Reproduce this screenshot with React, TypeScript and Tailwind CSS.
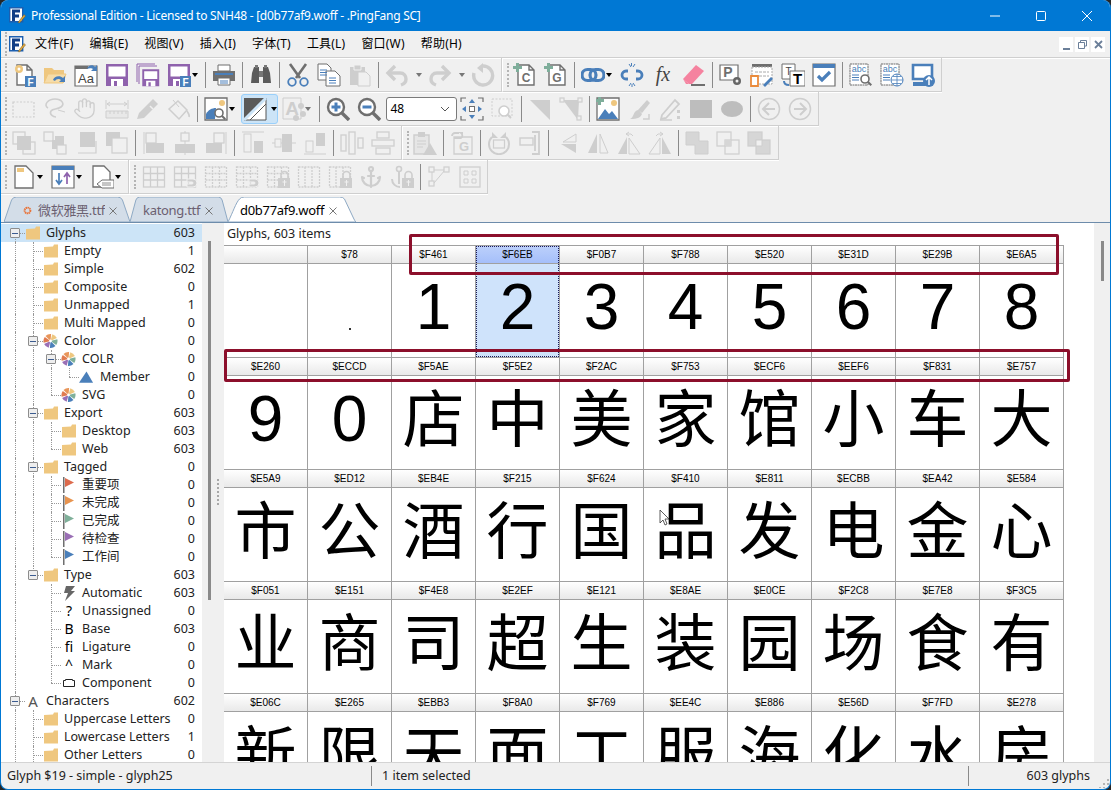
import React from 'react';
import { Hand, Anchor } from 'lucide-react';

const uiFont = "font-['Noto_Sans','Noto_Sans_CJK_SC',sans-serif]";
const G = '#cecece'; // disabled icon grey
const D = '#6f6f6f'; // dark icon grey
const B = '#4a7fba';
const P = '#8f62ad';
const T = '#efc77f';

const I = ({ children }: { children?: React.ReactNode }) => (
  <svg viewBox="0 0 24 24" className="w-6 h-6 mx-[3.5px] shrink-0">{children}</svg>
);
const Tri = () => <span className="block w-0 h-0 border-x-[3.5px] border-x-transparent border-t-[4px] border-t-black" />;
const TriG = () => <span className="block w-0 h-0 border-x-[3.5px] border-x-transparent border-t-[4px] border-t-[#777]" />;
const Drop = () => <span className="w-3 flex justify-center shrink-0"><TriG /></span>;
const DropT = ({ grey }: { grey?: boolean }) => <span className="w-3 -ml-1 pl-px shrink-0">{grey ? <TriG /> : <Tri />}</span>;
const Sep = () => <span className="w-px h-[26px] mx-[2.5px] bg-[#8a8a8a] shrink-0" />;
const Grip = ({ w }: { w: string }) => (
  <span className={`${w} h-full flex items-center pl-1 shrink-0`}>
    <span className="h-[24px] border-l-2 border-dotted border-[#b4b4b4]" />
  </span>
);
const Bar = ({ children, className = '' }: { children: React.ReactNode; className?: string }) => (
  <div className={`flex items-center h-[34px] border-b border-r border-[#cfcfcf] shadow-[0_1px_0_#fff] shrink-0 ${className}`}>{children}</div>
);

const Page = ({ c = D, x = 5, w = 15 }: { c?: string; x?: number; w?: number }) => (
  <path d={`M${x} 2h${w - 5}l5 5v15h-${w}z M${x + w - 5} 2v5h5`} fill="#fff" stroke={c} strokeWidth="1.4" />
);
const Label = ({ x, y, s, c = D, size = 11, w = 700 }: { x: number; y: number; s: string; c?: string; size?: number; w?: number }) => (
  <text x={x} y={y} fontSize={size} fontWeight={w} fill={c} textAnchor="middle" fontFamily="Liberation Sans, sans-serif">{s}</text>
);
const Floppy = ({ c = P }: { c?: string }) => (
  <g><path d="M1 1h22v22h-22z" fill={c} /><path d="M3.500 3.500h17v10h-17z" fill="#fff" /><path d="M6 16h12v7h-12z" fill="#fff" /><path d="M9 18h3v5h-3z" fill={c} /></g>
);
const BlueF = () => (
  <g><path d="M13 13h11v11h-11z" fill={B} /><Label x={18.500} y={22.500} s="F" c="#fff" size={10} /></g>
);
const Plus = () => <path d="M3 0h3v3h3v3h-3v3h-3v-3h-3v-3h3z" fill="#7fae9b" />;
const PieMark = () => {
  const cols = ['#eec77f', '#7fb09a', B, '#9a6fb5', '#e07a50', '#e8955a'];
  return (
    <>
      {cols.map((c, i) => {
        const a = (i * 60 - 75) * Math.PI / 180;
        const b = ((i + 1) * 60 - 85) * Math.PI / 180;
        return <path key={c} d={`M8 8L${8 + 7.500 * Math.cos(a)} ${8 + 7.500 * Math.sin(a)}A7.500 7.500 0 0 1 ${8 + 7.500 * Math.cos(b)} ${8 + 7.500 * Math.sin(b)}z`} fill={c} />;
      })}
      <circle cx="8" cy="8" r="1.500" fill="#fff" />
    </>
  );
};
const Logo = () => (
  <svg viewBox="0 0 17 17" className="w-[17px] h-[17px] shrink-0">
    <path d="M0.700 0.700h13v14h-13z" fill="#fff" stroke="#1c5fb0" strokeWidth="1.400" />
    <path d="M3 2.500h8v3h-5v2h4v3h-4v3.500h-3z" fill="#123f86" />
    <path d="M9 15.500l6-8 1.500 1.500-6 7z" fill="#e3a63a" stroke="#6b5a2a" strokeWidth="0.500" />
  </svg>
);

const row1a = (
  <>
    <I><Page /><circle cx="7" cy="6" r="4" fill="#eec77f" /><circle cx="7" cy="6" r="1.500" fill="#fff" /><BlueF /></I>
    <I><path d="M1 20V5h8l2 2h10v13z" fill={T} /><path d="M1 20l4-9h18l-3 9z" fill="#f6dca8" stroke={T} /><path d="M10 17c1-4 7-5 10-2l2-2v6h-6l2-2c-2-2-5-1-6 1z" fill={B} /></I>
    <I><path d="M1 3h22v20h-22z" fill="#fff" stroke={D} strokeWidth="1.200" /><path d="M1 3h13v3h-13z" fill={D} /><Label x={12} y={20} s="Aa" size={13} w={400} c="#444" /><path d="M13 6c1-4 6-5 8-2l2-2v6h-6l2-2c-1-1-4-1-6 0z" fill={B} /></I>
    <I><Floppy /></I>
    <I><path d="M1 1h18M1 1v18M3 3h18M3 3v18" stroke={P} fill="none" /><g transform="translate(5.500 5.500) scale(0.770)"><Floppy /></g></I>
    <I><Floppy /><BlueF /></I>
  </>
);

const Lines = ({ x, y, c = B }: { x: number; y: number; c?: string }) => (
  <path d={`M${x} ${y}h7M${x} ${y + 2.500}h7M${x} ${y + 5}h7`} stroke={c} strokeWidth="1" />
);
const Mag = ({ cx, cy, r = 3.500, c = D }: { cx: number; cy: number; r?: number; c?: string }) => (
  <g><circle cx={cx} cy={cy} r={r} fill="#fff" stroke={c} strokeWidth="1.600" /><path d={`M${cx + r * 0.7} ${cy + r * 0.7}l3.500 3.500`} stroke={c} strokeWidth="2" /></g>
);
const Arrow = ({ flip, c = G }: { flip?: boolean; c?: string }) => (
  <g transform={flip ? 'translate(24 0) scale(-1 1)' : undefined} fill="none" stroke={c} strokeWidth="3.400">
    <path d="M4 10h11c4 0 6 3 6 6s-2 5-5 6" /><path d="M10 3l-7 7 7 7" />
  </g>
);
const Box = ({ x, y, s = 10, f = 'none', c = G }: { x: number; y: number; s?: number; f?: string; c?: string }) => (
  <rect x={x} y={y} width={s} height={s} fill={f} stroke={c} strokeWidth="1.200" />
);
const Grid3 = ({ dash }: { dash?: boolean }) => (
  <g fill="none" stroke={G} strokeWidth="1.300" strokeDasharray={dash ? '2 1' : undefined}>
    <rect x="1.500" y="2" width="21" height="20" /><path d="M8.500 2v20M15.500 2v20M1.500 8.500h21M1.500 15h21" />
  </g>
);
const Lock = () => <g><path d="M15 13v-3a3.500 3.500 0 0 1 7 0v3" fill="none" stroke={G} strokeWidth="1.600" /><path d="M12 13h13v10h-13z" fill={G} /><path d="M18.500 15v6M16.500 17h4" stroke="#f0f0f0" /></g>;

const Toolbars = () => (
  <div className="flex flex-col shrink-0">
    <div className="flex">
      <Bar>
        <Grip w="w-[7.500px]" />
        {row1a}
        <DropT />
        <Sep />
        <I><path d="M6 2h12v6h-12z" fill="#fff" stroke={D} /><path d="M1 8h22v10h-22z" fill={D} /><path d="M3 10h18v2h-18z" fill={B} /><path d="M6 15h12v7h-12z" fill="#fff" stroke={D} /><path d="M8 18h8M8 20h8" stroke={B} /></I>
        <Sep />
        <I><path d="M3 10l2-6h5v16h-8zM21 10l-2-6h-5v16h8z" fill="#5b5b5b" /><path d="M10 8h4v6h-4z" fill="#777" /><path d="M6 2h3v3h-3zM15 2h3v3h-3z" fill="#777" /></I>
        <Sep />
        <I><path d="M4 1l10 14M20 1l-10 14" stroke={D} strokeWidth="2.600" /><circle cx="6" cy="19" r="3.800" fill="none" stroke={B} strokeWidth="1.800" /><circle cx="18" cy="19" r="3.800" fill="none" stroke={B} strokeWidth="1.800" /></I>
        <I><path d="M1 1h9l4 4v12h-13z" fill="#fff" stroke={D} /><path d="M9 8h9l5 5v10h-14z" fill="#fff" stroke={D} /><Lines x={3} y={7} /><Lines x={12} y={15} /></I>
        <I><path d="M2 4h15v18h-15z" fill={G} /><path d="M6 2h7v5h-7z" fill={G} stroke="#f0f0f0" /><path d="M10 9h8l4 4v10h-12z" fill="#f0f0f0" stroke={G} /></I>
        <Sep />
        <I><Arrow /></I>
        <Drop />
        <I><Arrow flip /></I>
        <Drop />
        <I><path d="M12 3a9.500 9.500 0 1 1-9 7" fill="none" stroke={G} strokeWidth="3.400" /><path d="M12 0v10l-6-5z" fill={G} /></I>
        <span className="w-0.5" />
      </Bar>
      <Bar className="border-l border-l-white">
        <Grip w="w-[7px]" />
        <I><Page x={5} w={16} /><Plus /><Label x={13} y={19} s="C" size={12} /></I>
        <I><Page x={5} w={16} /><Plus /><Label x={13} y={19} s="G" size={12} /></I>
        <Sep />
        <I><g fill="none" stroke={B} strokeWidth="3.200"><rect x="1" y="6.500" width="14" height="11" rx="5.500" /><rect x="9" y="6.500" width="14" height="11" rx="5.500" /></g></I>
        <DropT />
        <I><g fill="none" stroke={B} strokeWidth="2.800"><path d="M8 8h-2a4 4 0 0 0 0 8h2M16 8h2a4 4 0 0 1 0 8h-2" /></g><path d="M9 1l2 3M15 1l-2 3M9 23l2-3M15 23l-2-3M11.500 0v3M12 21v3" stroke={B} /></I>
        <I><text x="12" y="18" fontSize="20" fontStyle="italic" fill="#444" textAnchor="middle" fontFamily="Liberation Serif, serif">fx</text></I>
        <I><path d="M1 16L14 2l8 6-12 13h-3z" fill="#f5829f" /><path d="M1 16l6 5h-3z" fill="#f5829f" /><path d="M9 21h14v2h-14z" fill={D} /></I>
        <Sep />
        <I><path d="M1 2h18v15h-18z" fill="#fff" stroke={D} strokeWidth="1.200" /><Label x={9} y={14} s="P" size={14} /><circle cx="18" cy="18" r="4" fill="#666" /><circle cx="18" cy="18" r="1.500" fill="#f0f0f0" /></I>
        <I><path d="M2 1h20v3h-20z" fill={D} /><path d="M2 4h20v17h-20z" fill="#fff" stroke="#aaa" strokeDasharray="2 1" /><path d="M5 9h14M5 13h14" stroke="#aaa" strokeDasharray="3 1" /><path d="M1 13h7v10h-7z" fill="#fff" stroke="#ea8b3c" strokeWidth="1.800" /><path d="M13 22l8-8 2 2-8 8z" fill={B} /></I>
        <I><path d="M1 1h13v15h-13z" fill="#fff" stroke={D} /><Label x={7.500} y={12} s="T" size={10} c="#444" w={400} /><path d="M9 8h15v15h-15z" fill="#fff" stroke={D} /><Label x={16.500} y={21} s="T" size={15} c="#000" /><path d="M3 18c0 3 2 4 5 4" fill="none" stroke={B} strokeWidth="2" /></I>
        <I><path d="M1 1h22v22h-22z" fill="#fff" stroke={D} strokeWidth="1.200" /><path d="M1 1h22v4h-22z" fill={B} /><path d="M6 13l4 4 8-8" fill="none" stroke={B} strokeWidth="3.200" /></I>
        <Sep />
        <I><path d="M1 1h18v21h-18z" fill="#fff" stroke={D} strokeDasharray="2 0.500" /><Label x={10} y={9} s="abc" size={9} c={B} w={400} /><Lines x={3} y={12} /><Mag cx={16} cy={16} r={4} /></I>
        <I><path d="M1 1h18v21h-18z" fill="#fff" stroke={D} strokeDasharray="2 0.500" /><Label x={10} y={9} s="abc" size={9} c={B} w={400} /><Lines x={3} y={12} /><circle cx="17" cy="17" r="6" fill="#fff" stroke={B} /><path d="M11 17h12M17 11v12M13 13.500h8M13 20.500h8" stroke={B} strokeWidth="0.800" /></I>
        <I><path d="M2 2h19v14h-19z" fill="#fff" stroke={B} strokeWidth="2.600" /><path d="M2 19h12v4h-12z" fill={B} /><circle cx="18" cy="18" r="6" fill={B} /><path d="M18 22v-7M15 17l3-3 3 3" stroke="#fff" strokeWidth="1.500" fill="none" /></I>
        <span className="w-[2px]" />
      </Bar>
    </div>

    <Bar className="self-start">
      <Grip w="w-[7.500px]" />
      <I><rect x="1" y="5" width="21" height="15" fill="none" stroke={G} strokeWidth="1.200" strokeDasharray="2 1.500" /></I>
      <I><path d="M5 11c-5-3 0-9 7-9s10 5 6 8-8 1-10 4 2 6 5 6" fill="none" stroke={G} strokeWidth="1.600" /><path d="M15 13l7 2" stroke={G} /></I>
      <span className="w-6 mx-[3.500px] shrink-0 flex -translate-x-px"><Hand size={23} color={G} strokeWidth={1.400} /></span>
      <I><path d="M1 3v9M23 3v9M2 7h20M2 7l3-2M2 7l3 2M22 7l-3-2M22 7l-3 2" stroke={G} fill="none" /><path d="M1 14h22v7h-22z" fill="#e8e8e8" stroke={G} /><path d="M5 14v3M9 14v3M13 14v3M17 14v3M21 14v3" stroke={G} /></I>
      <I><path d="M3 16L17 2l5 5-14 14-7 1z" fill={G} /><path d="M14 9l3 3" stroke="#f0f0f0" strokeWidth="1.500" /></I>
      <I><path d="M11 4l9 9-8 9-10-10z" fill="#f0f0f0" stroke={G} strokeWidth="1.500" /><path d="M6 3l6 7" stroke={G} /><path d="M20 14c1 2 3 4 2 6" stroke={G} fill="none" strokeWidth="1.600" /></I>
      <Sep />
      <I><path d="M1 1h22v22h-22z" fill="#fff" stroke={D} strokeWidth="1.300" /><circle cx="18" cy="6" r="3" fill={T} /><path d="M2 22v-5c2-4 6-6 10-6l-1 11z" fill={B} /><Mag cx={15} cy={16} r={4} /></I>
      <DropT />
      <span className="ml-[1.500px] w-[37px] h-[30px] flex items-center rounded-[3px] border border-[#9ad0fb] bg-[#cce4f7] shrink-0">
        <svg viewBox="0 0 24 24" className="w-6 h-6 ml-[1px] shrink-0">
          <path d="M1 23V1h22z" fill="#5a5a5a" /><path d="M1 23L23 1v22z" fill="#fff" stroke="#555" /><path d="M1 23L23 1" stroke="#cce4f7" strokeWidth="3" /><path d="M7 23L23 7" stroke="#555" />
        </svg>
        <span className="ml-[4px]"><Tri /></span>
      </span>
      <I><path d="M1 1h18v21h-18z" fill="none" stroke={G} /><Label x={10} y={18} s="A" size={19} c={G} /><circle cx="19" cy="9" r="3" fill={G} /><circle cx="21" cy="17" r="3" fill={G} /><circle cx="14" cy="21" r="3" fill={G} /></I>
      <span className="w-[11px] -ml-1 shrink-0"><TriG /></span>
      <Sep />
      <I><circle cx="10" cy="10" r="8" fill="#fff" stroke={D} strokeWidth="2.400" /><path d="M16 16l7 7" stroke={D} strokeWidth="3.400" /><path d="M5.500 10h9M10 5.500v9" stroke={B} strokeWidth="3" /></I>
      <I><circle cx="10" cy="10" r="8" fill="#fff" stroke={D} strokeWidth="2.400" /><path d="M16 16l7 7" stroke={D} strokeWidth="3.400" /><path d="M5.500 10h9" stroke={B} strokeWidth="3" /></I>
      <div className={`ml-[1.500px] w-[71px] h-[24px] flex items-center justify-between pl-1 pr-[6px] bg-white border border-[#7a7a7a] rounded-[3px] text-[12px] text-black shrink-0 ${uiFont}`}>
        <span>48</span>
        <svg viewBox="0 0 10 6" className="w-[10px] h-[6px]"><path d="M1 1l4 4 4-4" fill="none" stroke="#555" /></svg>
      </div>
      <I><path d="M1 5V1h5M18 1h5v4M23 19v4h-5M6 23h-5v-4" fill="none" stroke={D} strokeWidth="1.200" /><rect x="9.500" y="9.500" width="5" height="5" fill="#fff" stroke={D} /><path d="M12 2l3 4h-6zM12 22l3-4h-6zM2 12l4-3v6zM22 12l-4-3v6z" fill={B} /></I>
      <I><rect x="1" y="2" width="20" height="17" fill="none" stroke={G} strokeDasharray="2 1.500" /><Mag cx={13} cy={14} r={5} c={G} /></I>
      <Sep />
      <I><path d="M2 3h20v20z" fill={G} /></I>
      <I><path d="M4 3h16l-1 20z" fill={G} /><Box x={1} y={1} s={4} f="#f0f0f0" /><Box x={19} y={1} s={4} f="#f0f0f0" /><Box x={18} y={19} s={4} f="#f0f0f0" /></I>
      <Sep />
      <I><path d="M1 1h22v22h-22z" fill="#fff" stroke={D} strokeWidth="1.300" /><path d="M2 22l7-10 4 5 3-3 6 8z" fill={B} /><circle cx="18" cy="6" r="3" fill={T} /><g transform="translate(-1 -1)"><Plus /></g></I>
      <I><path d="M11 13l9-10 3 3-8 10z" fill={G} /><path d="M3 22c4-1 3-9 9-9l3 4c-1 3-4 5-12 5z" fill={G} /><path d="M16 22h6v-5" fill="none" stroke={G} strokeWidth="1.500" /></I>
      <I><path d="M4 18L17 3l4 4-13 14-5 1z" fill="#f0f0f0" stroke={G} strokeWidth="1.800" /><path d="M2 23h12" stroke={G} strokeWidth="1.500" /><path d="M19 13h3v3h-3zM19 19h3v3h-3z" fill={G} /></I>
      <I><path d="M1 3h22v18h-22z" fill="#bdbdbd" /></I>
      <I><ellipse cx="12" cy="12" rx="11" ry="8" fill="#bdbdbd" /></I>
      <Sep />
      <I><circle cx="12" cy="12" r="10.500" fill="none" stroke={G} strokeWidth="1.500" /><path d="M18 12h-11M12 6l-6 6 6 6" fill="none" stroke={G} strokeWidth="2" /></I>
      <I><circle cx="12" cy="12" r="10.500" fill="none" stroke={G} strokeWidth="1.500" /><path d="M6 12h11M12 6l6 6-6 6" fill="none" stroke={G} strokeWidth="2" /></I>
      <span className="w-[2px]" />
    </Bar>

    <div className="flex">
      <Bar>
        <Grip w="w-[7.500px]" />
        <I><Box x={1} y={1} s={12} f="#f0f0f0" /><Box x={11} y={11} s={12} f="#f0f0f0" /><path d="M5 5h14v14h-14z" fill={G} /></I>
        <I><Box x={1} y={1} s={9} /><path d="M9 9h9v9h-9z" fill={G} /><path d="M12 5h9v9h-9z" fill={G} /><Box x={14} y={14} s={9} f="#f0f0f0" /></I>
        <I><path d="M6 1h15v15h-15z" fill={G} /><path d="M22 10v12h-18" fill="none" stroke={G} strokeWidth="1.200" /></I>
        <I><path d="M1 1h14v14h-14z" fill={G} /><Box x={7} y={7} s={15} f="#f0f0f0" /></I>
        <Sep />
        <I><path d="M2 1v22" stroke={G} /><Box x={4} y={2} s={10} /><path d="M4 12h18v10h-18z" fill={G} /></I>
        <I><path d="M12 0v24" stroke={G} /><Box x={8} y={2} s={8} f="#f0f0f0" /><path d="M2 13h20v9h-20z" fill={G} /></I>
        <I><path d="M22 1v22" stroke={G} /><Box x={10} y={2} s={10} /><path d="M2 12h16v10h-16z" fill={G} /></I>
        <Sep />
        <I><path d="M1 1h22" stroke={G} /><rect x="3" y="3" width="7" height="18" fill="none" stroke={G} /><path d="M13 10h9v12h-9z" fill={G} /></I>
        <I><path d="M0 12h24" stroke={G} /><rect x="3" y="8" width="6" height="8" fill="#f0f0f0" stroke={G} /><path d="M10 3h10v18h-10z" fill={G} /></I>
        <I><path d="M1 23h22" stroke={G} /><rect x="3" y="10" width="7" height="11" fill="none" stroke={G} /><path d="M13 2h9v13h-9z" fill={G} /></I>
        <Sep />
        <I><g fill="none" stroke={G} strokeWidth="1.300"><rect x="1" y="4" width="5" height="16" /><rect x="9" y="1" width="6" height="22" /><rect x="18" y="7" width="5" height="10" /></g></I>
        <I><g fill="none" stroke={G} strokeWidth="1.300"><rect x="6" y="1" width="12" height="6" /><rect x="1" y="9" width="22" height="6" /><rect x="5" y="17" width="14" height="6" /></g></I>
        <span className="w-[2px]" />
      </Bar>
      <Bar className="border-l border-l-white">
        <Grip w="w-[7px]" />
        <I><path d="M1 4h15v19h-15z" fill="#e6e6e6" stroke={G} strokeWidth="1.500" /><path d="M5 1h7v5h-7z" fill={G} /><path d="M4 10h9M4 13h9M4 16h6" stroke={G} /><path d="M17 12l7 12h-14z" fill={G} /></I>
        <Sep />
        <I><path d="M4 6h18v17h-18z" fill="none" stroke={G} strokeWidth="1.300" /><Label x={14} y={20} s="G" size={13} c={G} /><path d="M2 5a3 3 0 0 1 3-3h4M13 2h-2a3 3 0 0 1 0 5H4" fill="none" stroke={G} strokeWidth="1.800" /></I>
        <Sep />
        <I><path d="M5 6a10 10 0 1 0 14 0" fill="none" stroke={G} strokeWidth="2" /><path d="M5 1v6h6zM19 1v6h-6z" fill={G} /><rect x="6.500" y="9" width="11" height="8" fill="#f0f0f0" stroke={G} strokeWidth="1.200" /></I>
        <I><path d="M14 1h7v22h-7M17 4v16" fill="none" stroke={G} strokeWidth="1.800" /><rect x="2" y="7" width="13" height="7" fill="none" stroke={G} strokeWidth="1.400" /></I>
        <Sep />
        <I><path d="M21 3v8l-13 0z" fill="#f0f0f0" stroke={G} /><path d="M21 13v9l-15-9z" fill={G} /></I>
        <I><path d="M11 3v19h-9z" fill={G} /><path d="M14 3v19h8z" fill="#f0f0f0" stroke={G} /></I>
        <I><path d="M10 6v17h-9z" fill={G} /><path d="M12 7v16h11z" fill="#f0f0f0" stroke={G} /><path d="M12 1l-3 2 3 2M9 3h5l2 2" fill="none" stroke={G} /></I>
        <I><path d="M14 6v17h9z" fill={G} /><path d="M12 7v16h-11z" fill="#f0f0f0" stroke={G} /><path d="M12 1l3 2-3 2M15 3h-5l-2 2" fill="none" stroke={G} /></I>
        <Sep />
        <I><path d="M1 1h13v9h9v13h-13v-9h-9z" fill="#d6d6d6" stroke={G} /></I>
        <I><Box x={1} y={1} s={14} /><Box x={9} y={9} s={14} /><path d="M9 9h6v6h-6z" fill="#d6d6d6" /></I>
        <I><Box x={1} y={1} s={14} f="#d6d6d6" /><Box x={9} y={9} s={14} f="#d6d6d6" /><path d="M9 9h6v6h-6z" fill="#f0f0f0" stroke={G} /></I>
        <span className="w-[3px]" />
      </Bar>
    </div>

    <div className="flex">
      <Bar>
        <Grip w="w-[7.500px]" />
        <I><path d="M3 1h11l7 7v15h-18z" fill="#fff" stroke={D} strokeWidth="1.300" /><path d="M5 3h7v4h-7z" fill={T} /></I>
        <DropT />
        <I><path d="M1 1h22v22h-22z" fill="#fff" stroke={D} strokeWidth="1.200" /><path d="M1 1h22v4h-22z" fill={B} /><path d="M8 8v11M5 15l3 4 3-4" fill="none" stroke={B} strokeWidth="1.700" /><path d="M16 19V8M13 12l3-4 3 4" fill="none" stroke={P} strokeWidth="1.700" /></I>
        <DropT />
        <I><path d="M3 1h11l6 6v15h-17z" fill="#fff" stroke={D} strokeWidth="1.300" /><path d="M24 15v8h-12l-5-4 5-4z" fill="#fff" stroke={D} /><path d="M12 18h9M12 20h9" stroke={D} strokeWidth="0.800" /></I>
        <DropT />
        <span className="w-[2px]" />
      </Bar>
      <Bar className="border-l border-l-white">
        <Grip w="w-[8.500px]" />
        <I><Grid3 /></I>
        <I><Grid3 /><path d="M14 14h6a4 4 0 0 1 0 8h-6v-3h5a1 1 0 0 0 0-2h-5z" fill={G} stroke="#f0f0f0" /></I>
        <I><Grid3 dash /></I>
        <I><Grid3 dash /><path d="M14 14h6a4 4 0 0 1 0 8h-6v-3h5a1 1 0 0 0 0-2h-5z" fill={G} stroke="#f0f0f0" /></I>
        <I><Grid3 dash /><Lock /></I>
        <I><g fill="none" stroke={G} strokeWidth="1.300" strokeDasharray="2 1"><rect x="1.500" y="2" width="21" height="20" /><path d="M8 2v20M15 2v20" /></g></I>
        <I><g fill="none" stroke={G} strokeWidth="1.300" strokeDasharray="2 1"><rect x="1.500" y="2" width="21" height="20" /><path d="M8 2v20M15 2v20" /></g><Lock /></I>
        <span className="w-6 mx-[3.500px] shrink-0 flex"><Anchor size={24} color={G} strokeWidth={2.200} /></span>
        <I><circle cx="9" cy="4" r="2.500" fill="none" stroke={G} strokeWidth="1.600" /><path d="M9 7v12M2 14c0 5 4 8 8 8" fill="none" stroke={G} strokeWidth="2" /><Lock /></I>
        <Sep />
        <I><path d="M5 5l13 0M5 5v13M18 5L7 18" stroke={G} /><Box x={2} y={16} s={5} f="#f0f0f0" /><Box x={2} y={2} s={5} f="#f0f0f0" /><Box x={17} y={2} s={5} f="#f0f0f0" /></I>
        <I><rect x="2" y="2" width="20" height="20" fill="none" stroke={G} strokeWidth="1.300" /><path d="M6 6h4v4h-4zM14 6h4v4h-4zM6 14h4v4h-4zM14 14h4v4h-4z" fill="none" stroke={G} /></I>
        <span className="w-[1.500px]" />
      </Bar>
    </div>
  </div>
);

const TabShape = ({ active }: { active?: boolean }) => (
  <svg viewBox="0 0 100 25" preserveAspectRatio="none" className="absolute inset-0 w-full h-full">
    <path
      d={active ? 'M0 25C4 15 6 6 9 2Q10 0 13 0H87Q90 0 91 2L98 21Q99 24 100 25Z' : 'M0 25L6 3Q7 0 10 0H90Q93 0 94 3L100 25Z'}
      fill={active ? '#fff' : '#d3dde8'}
      stroke="#8ea9c4"
      strokeWidth="1"
      vectorEffect="non-scaling-stroke"
    />
  </svg>
);

const Tab = ({ w, pl, active, gear, label, labelW }: { w: string; pl: string; active?: boolean; gear?: boolean; label: string; labelW: string }) => (
  <div className={`relative ${w} h-[25px] shrink-0`}>
    <TabShape active={active} />
    <div className={`relative flex items-center h-full pt-[2px] text-[13px] tracking-[-0.3px] ${pl} ${active ? 'text-black' : 'text-[#6b6070]'}`}>
      {gear && (
        <svg viewBox="0 0 10 10" className="w-[9px] h-[9px] mr-[6px] shrink-0"><circle cx="5" cy="5" r="3.200" fill="none" stroke="#e8743b" strokeWidth="2.200" strokeDasharray="1.600 0.500" /></svg>
      )}
      <span className={`${labelW} overflow-hidden whitespace-nowrap`}>{label}</span>
      <svg viewBox="0 0 8 8" className="ml-[4px] w-2 h-2 shrink-0"><path d="M0.500 0.500l7 7M7.500 0.500l-7 7" stroke="#777" /></svg>
    </div>
  </div>
);

type Kind = 'folder' | 'pie' | 'tri' | 'flag' | 'bolt' | 'char' | 'comp' | 'A';
type TreeRow = { g: string; kind: Kind; label: string; n: number; sel?: boolean; c?: string; ch?: string };

const tree: TreeRow[] = [
  { g: 'E', kind: 'folder', label: 'Glyphs', n: 603, sel: true },
  { g: '|T', kind: 'folder', label: 'Empty', n: 1 },
  { g: '|T', kind: 'folder', label: 'Simple', n: 602 },
  { g: '|T', kind: 'folder', label: 'Composite', n: 0 },
  { g: '|T', kind: 'folder', label: 'Unmapped', n: 1 },
  { g: '|T', kind: 'folder', label: 'Multi Mapped', n: 0 },
  { g: '|E', kind: 'pie', label: 'Color', n: 0 },
  { g: '||E', kind: 'pie', label: 'COLR', n: 0 },
  { g: '|||L', kind: 'tri', label: 'Member', n: 0 },
  { g: '||L', kind: 'pie', label: 'SVG', n: 0 },
  { g: '|E', kind: 'folder', label: 'Export', n: 603 },
  { g: '||T', kind: 'folder', label: 'Desktop', n: 603 },
  { g: '||L', kind: 'folder', label: 'Web', n: 603 },
  { g: '|E', kind: 'folder', label: 'Tagged', n: 0 },
  { g: '||T', kind: 'flag', label: '重要项', n: 0, c: '#dd6b4d' },
  { g: '||T', kind: 'flag', label: '未完成', n: 0, c: '#e8944f' },
  { g: '||T', kind: 'flag', label: '已完成', n: 0, c: '#7fb09a' },
  { g: '||T', kind: 'flag', label: '待检查', n: 0, c: '#9a6fb5' },
  { g: '||L', kind: 'flag', label: '工作间', n: 0, c: B },
  { g: '|e', kind: 'folder', label: 'Type', n: 603 },
  { g: '| T', kind: 'bolt', label: 'Automatic', n: 603 },
  { g: '| T', kind: 'char', ch: '?', label: 'Unassigned', n: 0 },
  { g: '| T', kind: 'char', ch: 'B', label: 'Base', n: 603 },
  { g: '| T', kind: 'char', ch: 'ﬁ', label: 'Ligature', n: 0 },
  { g: '| T', kind: 'char', ch: '^', label: 'Mark', n: 0 },
  { g: '| L', kind: 'comp', label: 'Component', n: 0 },
  { g: 'E', kind: 'A', label: 'Characters', n: 602 },
  { g: '|T', kind: 'folder', label: 'Uppercase Letters', n: 0 },
  { g: '|T', kind: 'folder', label: 'Lowercase Letters', n: 1 },
  { g: '|T', kind: 'folder', label: 'Other Letters', n: 0 },
];

const Guide = ({ t, first }: { t: string; first: boolean }) => {
  const v = 'absolute left-[8.500px] border-l border-dotted border-[#999]';
  const h = 'absolute left-[9px] top-[9px] w-[10px] border-t border-dotted border-[#999]';
  return (
    <span className="relative w-[18px] h-[18px] shrink-0">
      {(t === '|' || t === 'T' || (t === 'E' && !first)) && <span className={`${v} top-0 bottom-0`} />}
      {t === 'E' && first && <span className={`${v} top-[9px] bottom-0`} />}
      {(t === 'L' || t === 'e') && <span className={`${v} top-0 h-[9px]`} />}
      {(t === 'T' || t === 'L' || t === 'E' || t === 'e') && <span className={h} />}
      {(t === 'E' || t === 'e') && (
        <span className="absolute left-[4px] top-[4px] w-[10px] h-[10px] border border-[#8d8d8d] bg-[#eeeeee] flex items-center justify-center rounded-[1px]">
          <span className="w-[6px] h-px bg-[#3c5c90]" />
        </span>
      )}
    </span>
  );
};

const TreeIcon = ({ r }: { r: TreeRow }) => {
  if (r.kind === 'folder') return <svg viewBox="0 0 14 14" className="w-[14px] h-[14px]"><path d="M0 3L9 2.500 10 0.500 14 0.500V13.500H0Z" fill={T} /></svg>;
  if (r.kind === 'pie') return <svg viewBox="0 0 16 16" className="w-4 h-4 -ml-px"><PieMark /></svg>;
  if (r.kind === 'tri') return <svg viewBox="0 0 16 14" className="w-4 h-[14px] -ml-px"><path d="M8 1l7 12h-15z" fill={B} /></svg>;
  if (r.kind === 'flag') return <svg viewBox="0 0 14 16" className="w-[14px] h-4"><path d="M1 0h1.500v16h-1.500z" fill={D} /><path d="M3 1l9 4.500-9 4.500z" fill={r.c} /></svg>;
  if (r.kind === 'bolt') return <svg viewBox="0 0 14 16" className="w-[14px] h-4"><path d="M4 1h9l-4 5h4l-10 10 3-8h-4z" fill="#666" /></svg>;
  if (r.kind === 'char') return <span className="block w-[14px] text-center text-[14px] leading-[18px] text-black">{r.ch}</span>;
  if (r.kind === 'comp') return <svg viewBox="0 0 14 14" className="w-[14px] h-[14px]"><path d="M1.500 4.500h2v-1h7v1h2v6h-11z" fill="none" stroke="#222" /></svg>;
  return <span className="block w-[14px] text-center text-[15px] leading-[18px] text-[#555]">A</span>;
};

const Tree = () => (
  <div className="w-[201px] shrink-0 h-full pt-px overflow-hidden bg-white text-[12.500px] text-[#222]">
    {tree.map((r) => (
      <div key={r.label} className={`flex items-center h-[18px] pl-[5px] pr-[7px] ${r.sel ? 'bg-[#cce4f7]' : ''}`}>
        {r.g.split('').map((t, i) => <Guide key={i} t={t} first={r.label === 'Glyphs'} />)}
        <span className="ml-[2px] w-[14px] shrink-0 flex items-center"><TreeIcon r={r} /></span>
        <span className="ml-[6px] flex-1 whitespace-nowrap">{r.label}</span>
        <span>{r.n}</span>
      </div>
    ))}
  </div>
);

const rows: [string, string][][] = [
  [['', ''], ['$78', '.'], ['$F461', '1'], ['$F6EB', '2'], ['$F0B7', '3'], ['$F788', '4'], ['$E520', '5'], ['$E31D', '6'], ['$E29B', '7'], ['$E6A5', '8']],
  [['$E260', '9'], ['$ECCD', '0'], ['$F5AE', '店'], ['$F5E2', '中'], ['$F2AC', '美'], ['$F753', '家'], ['$ECF6', '馆'], ['$EEF6', '小'], ['$F831', '车'], ['$E757', '大']],
  [['$E5A9', '市'], ['$ED12', '公'], ['$EB4E', '酒'], ['$F215', '行'], ['$F624', '国'], ['$F410', '品'], ['$E811', '发'], ['$ECBB', '电'], ['$EA42', '金'], ['$E584', '心']],
  [['$F051', '业'], ['$E151', '商'], ['$F4E8', '司'], ['$E2EF', '超'], ['$E121', '生'], ['$E8AE', '装'], ['$E0CE', '园'], ['$F2C8', '场'], ['$E7E8', '食'], ['$F3C5', '有']],
  [['$E06C', '新'], ['$E265', '限'], ['$EBB3', '天'], ['$F8A0', '面'], ['$F769', '工'], ['$EE4C', '服'], ['$E886', '海'], ['$E56D', '化'], ['$F7FD', '水'], ['$E278', '房']],
];

const Cell = ({ code, ch }: { code: string; ch: string }) => {
  const sel = code === '$F6EB';
  const latin = /[0-9]/.test(ch);
  return (
    <div className={`relative w-[84px] h-[112px] border-r border-b border-[#a0a0a0] ${sel ? 'bg-[#cfe3fb]' : 'bg-white'}`}>
      <div className={`h-[18px] border-b border-[#a0a0a0] flex items-center justify-center text-[10px] leading-none text-black font-['Liberation_Sans',sans-serif] ${sel ? 'bg-gradient-to-b from-[#bcd0fb] to-[#a5bffa]' : 'bg-gradient-to-b from-white to-[#e9e9e9]'}`}>
        {code}
      </div>
      {ch === '.' ? (
        <div className="flex justify-center pt-[64px]"><span className="w-[2px] h-[2px] bg-[#333]" /></div>
      ) : (
        <div className={`h-[93px] flex items-center justify-center text-black leading-none font-['Liberation_Sans','Noto_Sans_CJK_SC',sans-serif] ${latin ? 'text-[64px] pb-[7px]' : 'text-[62px] pb-[4px]'}`}>
          {ch}
        </div>
      )}
      {sel && <span className="absolute inset-0 border border-dotted border-[#1a1a5a]" />}
    </div>
  );
};

export default function App() {
  return (
    <div className="w-[1111px] h-[790px] bg-[#262626]">
      <div className={`relative w-full h-full flex flex-col overflow-hidden rounded-[8px] bg-[#f0f0f0] border-x border-b border-[#0078d4] ${uiFont}`}>
        {/* title bar */}
        <div className="h-[31px] -mx-px bg-[#0078d4] flex items-center text-white shrink-0">
          <span className="ml-[9px]"><Logo /></span>
          <span className="ml-[5px] text-[12px] tracking-[-0.28px] whitespace-nowrap">Professional Edition - Licensed to SNH48 - [d0b77af9.woff - .PingFang SC]</span>
          <div className="ml-auto flex pr-px">
            <span className="w-[46px] h-[31px] flex items-center justify-center"><svg viewBox="0 0 10 10" className="w-[10px] h-[10px]"><path d="M0 5h10" stroke="#fff" /></svg></span>
            <span className="w-[46px] h-[31px] flex items-center justify-center"><svg viewBox="0 0 10 10" className="w-[10px] h-[10px]"><rect x="0.500" y="0.500" width="9" height="9" rx="1" fill="none" stroke="#fff" /></svg></span>
            <span className="w-[46px] h-[31px] flex items-center justify-center"><svg viewBox="0 0 10 10" className="w-[10px] h-[10px]"><path d="M0 0l10 10M10 0l-10 10" stroke="#fff" /></svg></span>
          </div>
        </div>

        {/* menu bar */}
        <div className="h-[27px] flex items-center border-b border-[#cfcfcf] shadow-[0_1px_0_#fff] shrink-0">
          <Grip w="w-[8px]" />
          <Logo />
          <div className="ml-[9px] flex gap-4 text-[12px] tracking-[0.2px] text-black">
            {['文件(F)', '编辑(E)', '视图(V)', '插入(I)', '字体(T)', '工具(L)', '窗口(W)', '帮助(H)'].map((m) => <span key={m}>{m}</span>)}
          </div>
          <div className="ml-auto flex gap-[2px] pr-[5px]">
            <span className="w-[14px] h-[15px] bg-white flex items-end justify-center pb-[2px]"><span className="w-[7px] h-[2px] bg-[#6b7f99]" /></span>
            <span className="w-[14px] h-[15px] bg-white flex items-center justify-center"><svg viewBox="0 0 9 9" className="w-[9px] h-[9px]"><path d="M2.500 2.500V0.500H8.500V6H6.500M0.500 2.500H6.500V8.500H0.500Z" fill="none" stroke="#6b7f99" /></svg></span>
            <span className="w-[14px] h-[15px] bg-white flex items-center justify-center"><svg viewBox="0 0 9 9" className="w-[9px] h-[9px]"><path d="M1 1l7 7M8 1l-7 7" stroke="#6b7f99" strokeWidth="1.800" /></svg></span>
          </div>
        </div>

        <Toolbars />

        {/* document tabs */}
        <div className="h-[29px] pt-1 pl-[3px] flex items-end border-b border-[#6d8cab] shrink-0">
          <Tab w="w-[126px]" pl="pl-[19px]" gear label="微软雅黑.ttf" labelW="w-[67px]" />
          <Tab w="w-[98px]" pl="pl-[13px]" label="katong.ttf" labelW="w-[58px]" />
          <Tab w="w-[128px]" pl="pl-[12px]" active label="d0b77af9.woff" labelW="w-[85px]" />
        </div>

        {/* main split */}
        <div className="relative flex-1 min-h-0 flex">
          <Tree />
          <div className="w-[15px] bg-[#f0f0f0] flex justify-center shrink-0">
            <span className="mt-[18px] w-[3px] h-[359px] bg-[#8a8a8a]" />
          </div>
          <div className="w-[7px] bg-[#f0f0f0] flex items-start shrink-0">
            <span className="mt-[256px] h-[26px] border-l-2 border-dotted border-[#a8a8a8]" />
          </div>
          <div className="flex-1 min-w-0 bg-white overflow-hidden">
            <div className="h-[22px] pl-[3px] flex items-center text-[12.500px] text-[#222]">Glyphs, 603 items</div>
            <div className="w-[841px] -ml-px border-t border-l border-[#a0a0a0]">
              {rows.map((r, i) => (
                <div key={i} className="flex">
                  {r.map(([code, ch], j) => <Cell key={j} code={code} ch={ch} />)}
                </div>
              ))}
            </div>
          </div>
          <div className="w-[16px] bg-[#f0f0f0] flex justify-center shrink-0">
            <span className="mt-[18px] w-[3px] h-[40px] bg-[#8a8a8a]" />
          </div>

          {/* red annotation boxes drawn over the grid */}
          <span className="absolute left-[408px] top-[11px] w-[650px] h-[41px] border-[3px] border-[#8c0f2b] rounded-[2px]" />
          <span className="absolute left-[223px] top-[126px] w-[846px] h-[33px] border-[3px] border-[#8c0f2b] rounded-[2px]" />
          {/* mouse pointer */}
          <svg viewBox="0 0 12 18" className="absolute left-[658px] top-[286px] w-3 h-[18px]"><path d="M1 1v13l3-3 2 5 2-1-2-5h4z" fill="#fff" stroke="#333" strokeWidth="0.800" /></svg>
        </div>

        {/* status bar */}
        <div className="h-[27px] flex items-center border-t border-[#d4d4d4] text-[12.500px] text-[#222] shrink-0 relative">
          <span className="w-[370px] pl-[6px]">Glyph $19 - simple - glyph25</span>
          <span className="w-px h-[20px] bg-[#8a8a8a]" />
          <span className="w-[596px] pl-[10px]">1 item selected</span>
          <span className="w-px h-[20px] bg-[#8a8a8a]" />
          <span className="flex-1 text-right pr-[20px]">603 glyphs</span>
          <svg viewBox="0 0 10 10" className="absolute right-[1px] bottom-[1px] w-[10px] h-[10px]"><path d="M8 1h2v2h-2zM4 5h2v2h-2zM8 5h2v2h-2zM0 9h2v1h-2zM4 9h2v1h-2zM8 9h2v1h-2z" fill="#b4b4b4" /></svg>
        </div>
      </div>
    </div>
  );
}
